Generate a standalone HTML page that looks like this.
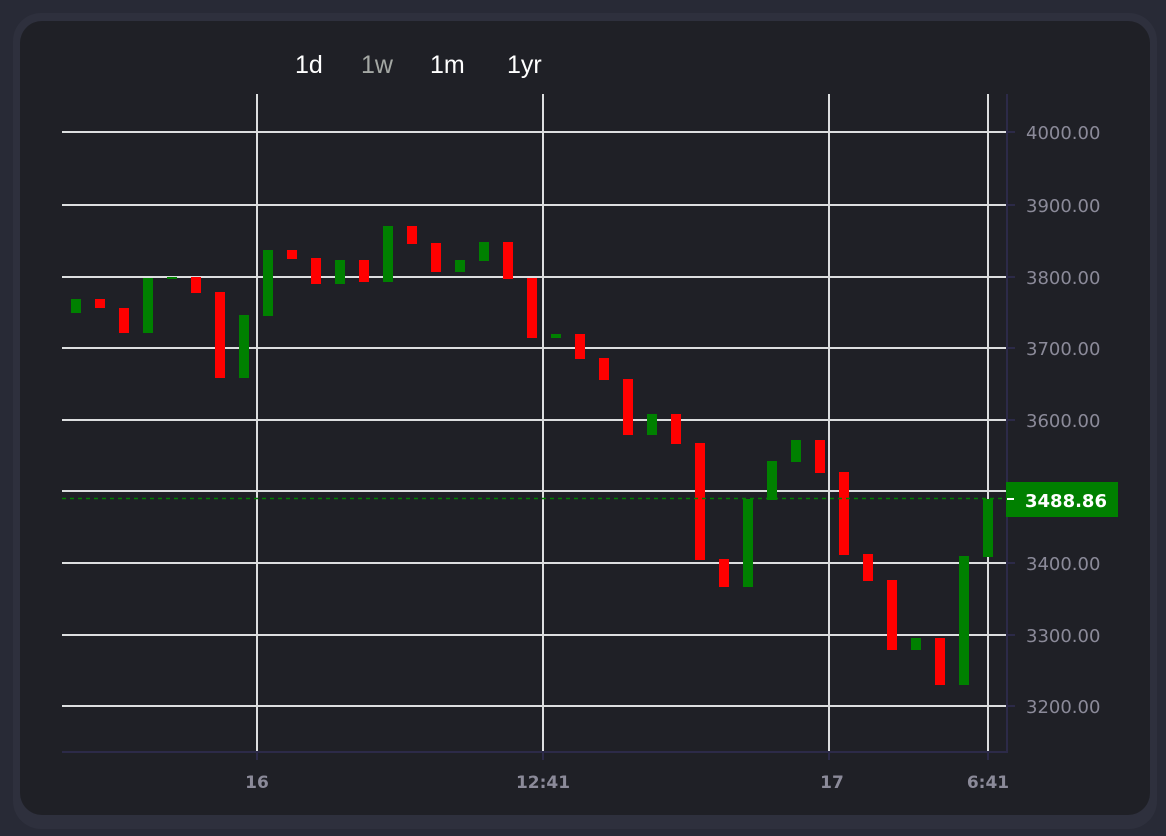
<!DOCTYPE html>
<html><head><meta charset="utf-8"><style>
html,body{margin:0;padding:0;background:#282a36;width:1166px;height:836px;overflow:hidden}
svg{position:absolute;left:0;top:0}
</style></head><body>
<svg width="1166" height="836" xmlns="http://www.w3.org/2000/svg">
<rect x="0" y="0" width="1166" height="836" fill="#282a36"/>
<rect x="13" y="13" width="1144" height="816" rx="28" fill="#2e303d"/>
<rect x="20" y="21" width="1130" height="794" rx="22" fill="#1f2026"/>
<g font-family="'Liberation Sans',sans-serif" font-size="25" fill="#fff">
<text x="295" y="73">1d</text>
<text x="361" y="73" fill="#a4a8a4">1w</text>
<text x="430" y="73">1m</text>
<text x="507" y="73">1yr</text>
</g>
<g stroke="#dcdedf" stroke-width="2">
<line x1="62" y1="132" x2="1006" y2="132"/>
<line x1="62" y1="205" x2="1006" y2="205"/>
<line x1="62" y1="277" x2="1006" y2="277"/>
<line x1="62" y1="348" x2="1006" y2="348"/>
<line x1="62" y1="420" x2="1006" y2="420"/>
<line x1="62" y1="491" x2="1006" y2="491"/>
<line x1="62" y1="563" x2="1006" y2="563"/>
<line x1="62" y1="635" x2="1006" y2="635"/>
<line x1="62" y1="706" x2="1006" y2="706"/>
<line x1="257" y1="94" x2="257" y2="752"/>
<line x1="543" y1="94" x2="543" y2="752"/>
<line x1="829" y1="94" x2="829" y2="752"/>
<line x1="988" y1="94" x2="988" y2="752"/>
</g>
<g stroke="#2c2a48" stroke-width="2">
<line x1="1007" y1="94" x2="1007" y2="753"/>
<line x1="62" y1="752" x2="1007" y2="752"/>
<line x1="1007" y1="132" x2="1015" y2="132"/><line x1="1007" y1="205" x2="1015" y2="205"/><line x1="1007" y1="277" x2="1015" y2="277"/><line x1="1007" y1="348" x2="1015" y2="348"/><line x1="1007" y1="420" x2="1015" y2="420"/><line x1="1007" y1="563" x2="1015" y2="563"/><line x1="1007" y1="635" x2="1015" y2="635"/><line x1="1007" y1="706" x2="1015" y2="706"/>
<line x1="257" y1="752" x2="257" y2="760"/><line x1="543" y1="752" x2="543" y2="760"/><line x1="829" y1="752" x2="829" y2="760"/><line x1="988" y1="752" x2="988" y2="760"/>
</g>
<g>
<rect x="71" y="299" width="10" height="14" fill="#008000"/>
<rect x="95" y="299" width="10" height="9" fill="#f00"/>
<rect x="119" y="308" width="10" height="25" fill="#f00"/>
<rect x="143" y="278" width="10" height="55" fill="#008000"/>
<rect x="167" y="277" width="10" height="2" fill="#008000"/>
<rect x="191" y="277" width="10" height="16" fill="#f00"/>
<rect x="215" y="292" width="10" height="86" fill="#f00"/>
<rect x="239" y="315" width="10" height="63" fill="#008000"/>
<rect x="263" y="250" width="10" height="66" fill="#008000"/>
<rect x="287" y="250" width="10" height="9" fill="#f00"/>
<rect x="311" y="258" width="10" height="26" fill="#f00"/>
<rect x="335" y="260" width="10" height="24" fill="#008000"/>
<rect x="359" y="260" width="10" height="22" fill="#f00"/>
<rect x="383" y="226" width="10" height="56" fill="#008000"/>
<rect x="407" y="226" width="10" height="18" fill="#f00"/>
<rect x="431" y="243" width="10" height="29" fill="#f00"/>
<rect x="455" y="260" width="10" height="12" fill="#008000"/>
<rect x="479" y="242" width="10" height="19" fill="#008000"/>
<rect x="503" y="242" width="10" height="37" fill="#f00"/>
<rect x="527" y="278" width="10" height="60" fill="#f00"/>
<rect x="551" y="334" width="10" height="4" fill="#008000"/>
<rect x="575" y="334" width="10" height="25" fill="#f00"/>
<rect x="599" y="358" width="10" height="22" fill="#f00"/>
<rect x="623" y="379" width="10" height="56" fill="#f00"/>
<rect x="647" y="414" width="10" height="21" fill="#008000"/>
<rect x="671" y="414" width="10" height="30" fill="#f00"/>
<rect x="695" y="443" width="10" height="117" fill="#f00"/>
<rect x="719" y="559" width="10" height="28" fill="#f00"/>
<rect x="743" y="499" width="10" height="88" fill="#008000"/>
<rect x="767" y="461" width="10" height="39" fill="#008000"/>
<rect x="791" y="440" width="10" height="22" fill="#008000"/>
<rect x="815" y="440" width="10" height="33" fill="#f00"/>
<rect x="839" y="472" width="10" height="83" fill="#f00"/>
<rect x="863" y="554" width="10" height="27" fill="#f00"/>
<rect x="887" y="580" width="10" height="70" fill="#f00"/>
<rect x="911" y="638" width="10" height="12" fill="#008000"/>
<rect x="935" y="638" width="10" height="47" fill="#f00"/>
<rect x="959" y="556" width="10" height="129" fill="#008000"/>
<rect x="983" y="499" width="10" height="58" fill="#008000"/>
</g>
<line x1="62" y1="498.5" x2="1006" y2="498.5" stroke="#008000" stroke-width="1.5" stroke-dasharray="4,4"/>
<rect x="1006" y="482" width="112" height="35" fill="#008000"/>
<line x1="1007" y1="499" x2="1014" y2="499" stroke="#fff" stroke-width="2"/>
<text x="1025" y="507" font-family="'DejaVu Sans',sans-serif" font-weight="bold" font-size="18" fill="#fff">3488.86</text>
<g font-family="'DejaVu Sans',sans-serif" font-size="18" fill="#8b8a99">
<text x="1026" y="139">4000.00</text>
<text x="1026" y="212">3900.00</text>
<text x="1026" y="284">3800.00</text>
<text x="1026" y="355">3700.00</text>
<text x="1026" y="427">3600.00</text>
<text x="1026" y="570">3400.00</text>
<text x="1026" y="642">3300.00</text>
<text x="1026" y="713">3200.00</text>
</g>
<g font-family="'DejaVu Sans',sans-serif" font-weight="bold" font-size="17" fill="#8b8a99" text-anchor="middle">
<text x="257" y="788">16</text>
<text x="543" y="788">12:41</text>
<text x="832" y="788">17</text>
<text x="988" y="788">6:41</text>
</g>
</svg>
</body></html>
